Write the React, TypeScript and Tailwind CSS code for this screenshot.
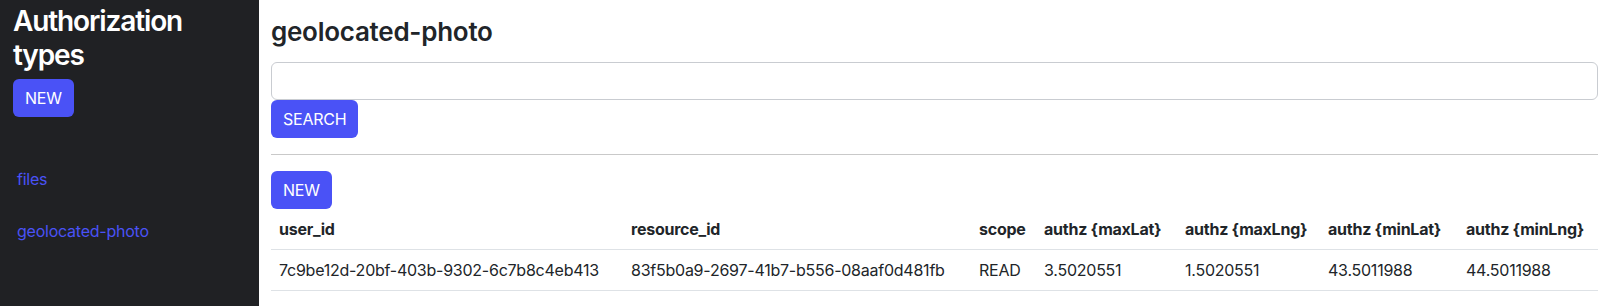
const columns = [
  { key: "user_id", label: "user_id", width: "w-[352px]" },
  { key: "resource_id", label: "resource_id", width: "w-[348px]" },
  { key: "scope", label: "scope", width: "w-[65px]" },
  { key: "maxLat", label: "authz {maxLat}", width: "w-[141px]" },
  { key: "maxLng", label: "authz {maxLng}", width: "w-[143px]" },
  { key: "minLat", label: "authz {minLat}", width: "w-[138px]" },
  { key: "minLng", label: "authz {minLng}", width: "" },
];

const rows = [
  {
    user_id: "7c9be12d-20bf-403b-9302-6c7b8c4eb413",
    resource_id: "83f5b0a9-2697-41b7-b556-08aaf0d481fb",
    scope: "READ",
    maxLat: "3.5020551",
    maxLng: "1.5020551",
    minLat: "43.5011988",
    minLng: "44.5011988",
  },
];

const types = ["files", "geolocated-photo"];

const Button = ({ children }: { children: React.ReactNode }) => (
  <button className="px-3 py-[7px] text-base leading-6 text-white bg-[#4a52f6] rounded-[6px] cursor-pointer">
    {children}
  </button>
);

export default function App() {
  return (
    <div className="flex min-h-[306px] font-['Inter','Liberation_Sans',sans-serif] text-[#212529] tracking-[-0.015em]">
      <aside className="w-[259px] shrink-0 bg-[#202124] pl-[13px] pr-4 pt-[5px]">
        <h1 className="max-w-[215px] text-[28px] leading-[1.2] font-semibold text-white tracking-[-0.04em]">
          Authorization types
        </h1>
        <div className="mt-[7px]">
          <Button>NEW</Button>
        </div>
        <ul className="mt-[36px] pl-1">
          {types.map((t) => (
            <li key={t} className="py-[14px] leading-6">
              <a href="#" className="text-[#4a52f6]">
                {t}
              </a>
            </li>
          ))}
        </ul>
      </aside>

      <main className="flex-1 pl-3 pr-[9px] pt-[16px]">
        <h2 className="text-[26px] leading-[1.2] font-semibold tracking-[-0.01em]">geolocated-photo</h2>
        <input
          type="text"
          className="mt-[15px] block w-full h-[38px] border border-[#c9ccd1] rounded-[6px] px-3"
        />
        <Button>SEARCH</Button>
        <hr className="mt-4 border-t border-[#c9c9c9]" />
        <div className="mt-4">
          <Button>NEW</Button>
        </div>
        <table className="w-full table-fixed text-left">
          <thead>
            <tr className="border-b border-[#dee2e6]">
              {columns.map((c) => (
                <th key={c.key} className={`${c.width} px-2 py-2 leading-6 font-bold`}>
                  {c.label}
                </th>
              ))}
            </tr>
          </thead>
          <tbody>
            {rows.map((r) => (
              <tr key={r.user_id} className="border-b border-[#dee2e6]">
                {columns.map((c) => (
                  <td key={c.key} className="px-2 py-2 leading-6 whitespace-nowrap">
                    {r[c.key as keyof typeof r]}
                  </td>
                ))}
              </tr>
            ))}
          </tbody>
        </table>
      </main>
    </div>
  );
}
